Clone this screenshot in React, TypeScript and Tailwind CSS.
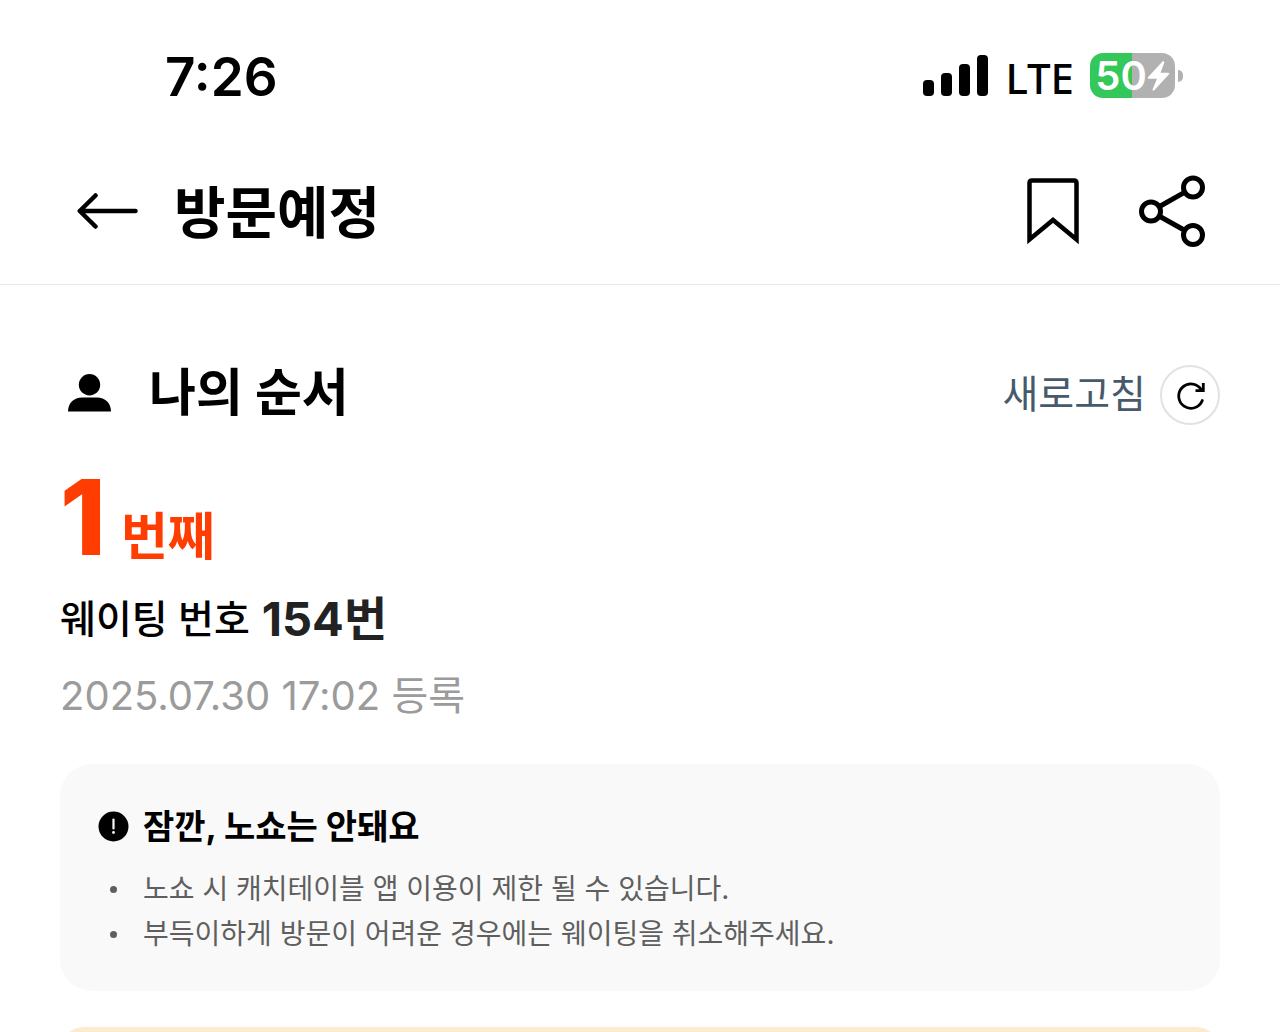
import { useState } from 'react'

const notices = [
  '노쇼 시 캐치테이블 앱 이용이 제한 될 수 있습니다.',
  '부득이하게 방문이 어려운 경우에는 웨이팅을 취소해주세요.',
]

function StatusBar() {
  return (
    <div className="flex h-[138px] shrink-0 items-center justify-between pt-4 pr-[97px] pl-[165px]">
      <span className="text-[53px] leading-none font-semibold">7:26</span>
      <div className="flex items-center gap-4 pb-[3px]">
        <svg width="66" height="42" viewBox="0 0 66 42" aria-hidden="true">
          <rect x="0" y="25" width="11" height="16" rx="4" />
          <rect x="18" y="18" width="11" height="23" rx="4" />
          <rect x="36" y="9" width="11" height="32" rx="4" />
          <rect x="54" y="0" width="11" height="41" rx="4" />
        </svg>
        <span className="pt-1 font-['Noto_Sans',sans-serif] text-[42px] leading-none font-medium">LTE</span>
        {/* バッテリー */}
        <div className="flex items-center gap-[3px]">
          <div className="flex h-[45px] w-[85px] items-center justify-center rounded-[13px] bg-linear-to-r from-[#34c759] from-50% to-[#b1b1b1] to-50% text-white">
            <span className="text-[40px] leading-none font-semibold">50</span>
            <svg width="23" height="32" viewBox="0 0 23 32" fill="currentColor" aria-hidden="true">
              <path d="M15.200 1.800 1.200 17c-.8.900-.4 1.800.8 1.800h8L5.700 29c-.6 1.500.8 2.200 1.800 1.100L21.800 14.600c.8-.9.4-1.800-.8-1.800h-7.500L17.200 3C17.800 1.500 16.200.7 15.200 1.800Z" />
            </svg>
          </div>
          <div className="h-3 w-[5px] rounded-r-full bg-[#b1b1b1]" />
        </div>
      </div>
    </div>
  )
}

export default function App() {
  const [saved, setSaved] = useState(false)

  return (
    <div className="flex h-screen flex-col overflow-hidden bg-white font-['Inter','Noto_Sans_CJK_KR',sans-serif] text-black">
      <StatusBar />

      {/* ヘッダー */}
      <header className="flex h-[147px] shrink-0 items-center justify-between border-b border-[#e8e8e8] pr-[73px] pl-[77px]">
        <div className="flex items-center gap-9">
          <button type="button" aria-label="뒤로">
            <svg width="61" height="38" viewBox="0 0 61 38" fill="none" stroke="currentColor" strokeWidth="4.500" strokeLinecap="round" strokeLinejoin="round">
              <path d="M18.500 3.500 2.800 19l15.700 15.500M2.800 19H58.500" />
            </svg>
          </button>
          <h1 className="pt-1 text-[56px] leading-none font-bold">방문예정</h1>
        </div>
        <div className="flex items-center gap-[60px]">
          <button type="button" aria-label="저장" aria-pressed={saved} onClick={() => setSaved(!saved)}>
            <svg width="52" height="68" viewBox="0 0 52 68" fill={saved ? 'currentColor' : 'none'} stroke="currentColor" strokeWidth="4.500">
              <path d="M2.500 62.500V6q0-2.500 2.500-2.500h42q2.500 0 2.500 2.500v56.500L26 43Z" />
            </svg>
          </button>
          <button type="button" aria-label="공유">
            <svg width="68" height="72" viewBox="0 0 68 72" fill="none" stroke="currentColor" strokeWidth="5">
              <circle cx="12" cy="36.500" r="9.500" />
              <circle cx="54" cy="12.500" r="9.500" />
              <circle cx="54" cy="60" r="9.500" />
              <path d="m20.500 31.500 25-14.200M20.500 41.300l25 14" />
            </svg>
          </button>
        </div>
      </header>

      <main className="flex flex-col px-[60px] pt-20">
        <div className="flex h-[60px] items-center justify-between">
          <div className="flex items-center gap-[38px] pb-[5px] pl-2">
            <svg width="43" height="38" viewBox="0 0 43 38" fill="currentColor" aria-hidden="true">
              <circle cx="21.500" cy="10.700" r="10.700" />
              <path d="M0 37.500C0 29 6 23.500 14 23.500h15c8 0 14 5.500 14 14Z" />
            </svg>
            <h2 className="text-[51px] leading-none font-bold">나의 순서</h2>
          </div>
          <button type="button" className="flex items-center gap-[14px] text-[39px] leading-none text-[#465a6b]">
            <span className="pb-1">새로고침</span>
            <span className="flex size-[60px] items-center justify-center rounded-full border-2 border-[#e2e2e2] text-black">
              <svg width="30" height="30" viewBox="0 0 30 30" fill="none" stroke="currentColor" strokeWidth="2.800">
                <path d="M27.300 20.500A12.200 12.200 0 1 1 26.500 10" strokeLinecap="round" />
                <path d="M28.300 3v7.700h-7.800" />
              </svg>
            </span>
          </button>
        </div>

        {/* 順番 */}
        <p className="mt-10 flex items-baseline gap-[15px] leading-[104px] font-bold text-[#ff3d00]">
          <span className="text-[104px] font-extrabold">1</span>
          <span className="text-[51px]">번째</span>
        </p>
        <p className="flex items-center gap-3 leading-[59px]">
          <span className="text-[39px] font-medium">웨이팅 번호</span>
          <strong className="text-[47px] font-bold text-[#222]">154번</strong>
        </p>
        <p className="mt-5 text-[40px] leading-[56px] text-[#9b9b9b]">2025.07.30 17:02 등록</p>

        {/* ノーショーの注意 */}
        <section className="mt-10 rounded-[32px] bg-[#f9f9f9] px-[38px] pt-10 pb-[34px]">
          <div className="flex items-center gap-[14px]">
            <svg width="31" height="31" viewBox="0 0 31 31" aria-hidden="true">
              <circle cx="15.500" cy="15.500" r="15" />
              <path d="M15.500 8.500v9" stroke="#f9f9f9" strokeWidth="2.200" strokeLinecap="round" />
              <circle cx="15.500" cy="21.500" r="1.400" fill="#f9f9f9" />
            </svg>
            <h3 className="text-[34px] leading-[45px] font-bold">잠깐, 노쇼는 안돼요</h3>
          </div>
          <ul className="mt-[18px] text-[28px] leading-[45px] text-[#5f5f5f]">
            {notices.map((text) => (
              <li key={text} className="flex items-center gap-[14px]">
                <span className="flex w-[31px] justify-center">
                  <span className="size-[7px] rounded-full bg-current" />
                </span>
                {text}
              </li>
            ))}
          </ul>
        </section>

        <section className="mt-9 h-40 shrink-0 rounded-3xl bg-[#fdebd0]" />
      </main>
    </div>
  )
}
